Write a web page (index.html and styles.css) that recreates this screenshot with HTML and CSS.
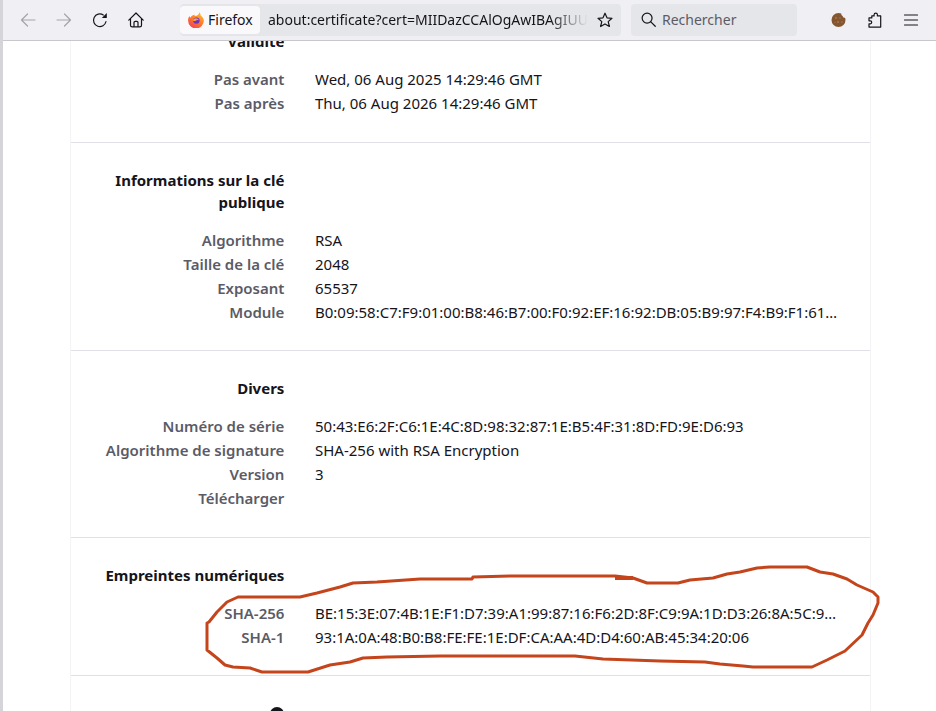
FILE: index.html
```html
<!DOCTYPE html>
<html lang="fr">
<head>
<meta charset="utf-8">
<title>Certificat</title>
<link rel="stylesheet" href="styles.css">
</head>
<body>
<div class="window">
  <header class="toolbar">
    <button class="tool tool-off" aria-label="Retour"><svg viewBox="0 0 16 16"><path d="M15 8H1.500M7.500 2 1.500 8l6 6"/></svg></button>
    <button class="tool tool-off" aria-label="Avancer"><svg viewBox="0 0 16 16"><path d="M1 8h13.500M8.500 2l6 6-6 6"/></svg></button>
    <button class="tool" aria-label="Actualiser"><svg viewBox="0 0 16 16"><path d="M14 9.500A6.300 6.300 0 1 1 11.300 3"/><path class="fill" d="M14.800 1v5H9.800z"/></svg></button>
    <button class="tool" aria-label="Accueil"><svg viewBox="0 0 16 16"><path d="M.8 8.200 8 1l7.200 7.200M2.500 6.800v6.400c0 1 .7 1.700 1.700 1.700h7.600c1 0 1.700-.7 1.700-1.700V6.800M6 14.800V10.500c0-.7.500-1.200 1.200-1.200h1.600c.7 0 1.200.5 1.200 1.200v4.300"/></svg></button>
    <div class="urlbar">
      <div class="chip">
        <svg class="fx" viewBox="0 0 16 16">
          <defs>
            <linearGradient id="fxg" x1="0.8" y1="0" x2="0.2" y2="1"><stop offset="0" stop-color="#ffc32b"/><stop offset=".5" stop-color="#ff7a2a"/><stop offset="1" stop-color="#f23c5e"/></linearGradient>
          </defs>
          <path fill="url(#fxg)" d="M11.200 0c1 1.200 1.500 2.300 1.500 3.400 1.200.9 3.100 2.500 3.200 5A7.900 7.900 0 0 1 .1 8.700C0 7 .5 5.200 1.500 4c.2.8.5 1.200 1 1.700C3.200 4 4.800 3 6.800 2.700c-.3.500-.3 1 0 1.300C9.200 3.800 11.300 2.300 11.200 0z"/>
          <circle cx="8.400" cy="8.600" r="3.200" fill="#7335b8"/>
          <path fill="#ffa02e" d="M5 8.400c1 .8 2.100.6 3.100 0 .9-.6 1.900-.6 2.700-.2-.5-1.200-1.600-1.900-2.800-1.900-1.500 0-2.800.9-3 2.100z"/>
        </svg>
        <span>Firefox</span>
      </div>
      <span class="url">about:certificate?cert=MIIDazCCAlOgAwIBAgIUU</span>
      <svg class="star" viewBox="0 0 16 16"><path d="M8 1.200 10 5.800l5 .5-3.800 3.300 1.200 4.900L8 11.900l-4.400 2.600 1.200-4.900L1 6.300l5-.5z"/></svg>
    </div>
    <div class="search">
      <svg viewBox="0 0 16 16"><circle cx="6.500" cy="6.500" r="5.300"/><path d="m10.500 10.500 4.700 4.700"/></svg>
      <span>Rechercher</span>
    </div>
    <div class="tools-right">
      <button class="tool" aria-label="Cookie"><svg class="cookie" viewBox="0 0 16 16"><path d="M7.500 1c1 0 1.900.2 2.800.6-.2 1.200.3 2.200 1.400 2.400 0 1.100.9 1.900 2.300 1.800.3.700.5 1.400.5 2.200a7 7 0 1 1-7-7z"/><circle class="crumb" cx="5" cy="6" r=".9"/><circle class="crumb" cx="9" cy="6" r=".8"/><circle class="crumb" cx="7" cy="10" r="1"/><circle class="crumb" cx="11" cy="10" r=".8"/><circle class="crumb" cx="4" cy="10.500" r=".6"/></svg></button>
      <button class="tool" aria-label="Extensions"><svg viewBox="0 0 16 16"><path d="M5.300 3.500h2.300V2.300c0-2 3.300-2 3.300 0v1.200h3.300v11.200H2.500v-3.300h1.300c1.900 0 1.900-3 0-3H2.500V5.500h2.800z" transform="translate(-.5 .4)"/></svg></button>
      <button class="tool" aria-label="Menu"><svg viewBox="0 0 16 16"><path d="M1.500 3h13M1.500 8h13M1.500 13h13"/></svg></button>
    </div>
  </header>

  <main class="viewport">
    <article class="card">
      <section class="section section-first">
        <h2 class="heading">Validité</h2>
        <div class="row"><span class="label">Pas avant</span><span class="value">Wed, 06 Aug 2025 14:29:46 GMT</span></div>
        <div class="row"><span class="label">Pas après</span><span class="value">Thu, 06 Aug 2026 14:29:46 GMT</span></div>
      </section>
      <section class="section">
        <h2 class="heading">Informations sur la clé publique</h2>
        <div class="row"><span class="label">Algorithme</span><span class="value">RSA</span></div>
        <div class="row"><span class="label">Taille de la clé</span><span class="value">2048</span></div>
        <div class="row"><span class="label">Exposant</span><span class="value">65537</span></div>
        <div class="row"><span class="label">Module</span><span class="value">B0:09:58:C7:F9:01:00:B8:46:B7:00:F0:92:EF:16:92:DB:05:B9:97:F4:B9:F1:61…</span></div>
      </section>
      <section class="section">
        <h2 class="heading">Divers</h2>
        <div class="row"><span class="label">Numéro de série</span><span class="value">50:43:E6:2F:C6:1E:4C:8D:98:32:87:1E:B5:4F:31:8D:FD:9E:D6:93</span></div>
        <div class="row"><span class="label">Algorithme de signature</span><span class="value">SHA-256 with RSA Encryption</span></div>
        <div class="row"><span class="label">Version</span><span class="value">3</span></div>
        <div class="row row-tall"><span class="label">Télécharger</span><span class="value"></span></div>
      </section>
      <section class="section">
        <h2 class="heading">Empreintes numériques</h2>
        <div class="row"><span class="label">SHA-256</span><span class="value">BE:15:3E:07:4B:1E:F1:D7:39:A1:99:87:16:F6:2D:8F:C9:9A:1D:D3:26:8A:5C:9…</span></div>
        <div class="row"><span class="label">SHA-1</span><span class="value">93:1A:0A:48:B0:B8:FE:FE:1E:DF:CA:AA:4D:D4:60:AB:45:34:20:06</span></div>
      </section>
      <section class="section section-last">
        <div class="dot-col"><span class="dot"></span></div>
      </section>
    </article>
    <svg class="scribble" viewBox="0 0 936 711" aria-hidden="true">
      <path d="M207 623 209 622 217 612 227 602 238 597H300L317 593 340 587 353 583 377 582 420 579H472L473 577 510 576H615L633 578 647 583H678L690 580 713 578 727 574 740 572 757 568 770 567H807L820 572 833 574 847 579 857 585 873 592 878 597V603L873 615 868 623 862 635 845 651 827 660 812 667H753L743 666 720 664 705 662 660 661 603 659 575 656H440L387 657 363 658 350 662 330 665 308 672H262L250 668 233 667 225 665 217 658 207 650z"/>
      <rect x="615" y="576" width="18" height="4"/>
    </svg>
  </main>
</div>
</body>
</html>
```

FILE: styles.css
```css
* { box-sizing: border-box; }

html, body {
  margin: 0;
  height: 100%;
  overflow: hidden;
  background: #fff;
}

body {
  font-family: "Noto Sans", sans-serif;
  color: #15141a;
}

.window {
  height: 711px;
  display: flex;
  flex-direction: column;
  border-left: 3px solid #a9a9b0;
  border-image: linear-gradient(to right, #d4d4d9 33%, #8f8f97 33%, #8f8f97 66%, #c4c4ca 66%) 1;
  position: relative;
}

/* Toolbar */
.toolbar {
  flex: 0 0 41px;
  display: flex;
  align-items: center;
  padding: 0 7px 1px 7px;
  background: #f0f0f4;
  border-bottom: 1px solid #c8c8cc;
}

.tool {
  width: 36px;
  height: 32px;
  padding: 0;
  border: 0;
  background: none;
  display: flex;
  align-items: center;
  justify-content: center;
}

.tool svg {
  width: 16px;
  height: 16px;
  fill: none;
  stroke: #15141a;
  stroke-width: 1.2;
  stroke-linejoin: round;
  stroke-linecap: round;
}

.tool svg .fill {
  fill: #15141a;
  stroke: none;
}

.tool-off svg { stroke: #a3a3a9; }

.urlbar {
  margin-left: 26px;
  width: 441px;
  height: 32px;
  display: flex;
  align-items: center;
  background: #e5e6e9;
  border-radius: 4px;
  overflow: hidden;
  font-size: 14px;
  position: relative;
}

.chip {
  flex: 0 0 80px;
  height: 28px;
  display: flex;
  align-items: center;
  gap: 4px;
  padding-left: 8px;
  background: #f9f9fb;
  border-radius: 4px;
}

.fx {
  width: 16px;
  height: 16px;
}

.url {
  margin-left: 8px;
  width: 320px;
  white-space: nowrap;
  overflow: hidden;
  -webkit-mask-image: linear-gradient(to right, #000 88%, transparent 100%);
  mask-image: linear-gradient(to right, #000 88%, transparent 100%);
}

.star {
  width: 16px;
  height: 16px;
  margin-left: 9px;
  fill: none;
  stroke: #15141a;
  stroke-width: 1.2;
  stroke-linejoin: round;
}

.search {
  margin-left: 10px;
  width: 166px;
  height: 32px;
  display: flex;
  align-items: center;
  gap: 6px;
  padding-left: 10px;
  background: #e5e6e9;
  border-radius: 4px;
  font-size: 14px;
  color: #5b5b66;
}

.search svg {
  width: 15px;
  height: 15px;
  fill: none;
  stroke: #15141a;
  stroke-width: 1.3;
  stroke-linecap: round;
}

.tools-right {
  margin-left: auto;
  display: flex;
}

.tool svg.cookie {
  stroke: none;
  fill: #85552f;
}

.tool svg.cookie .crumb { fill: #a67a52; }

/* Page */
.viewport {
  flex: 1;
  min-height: 0;
  overflow: hidden;
  padding-left: 67px;
}

.card {
  width: 801px;
  margin-top: -37px;
  border-left: 1px solid #f4f4f6;
  border-right: 1px solid #f4f4f6;
}

.section {
  padding: 26px 0 26px;
  border-bottom: 1px solid #e0e0e6;
  font-size: 15px;
}

.section-first { padding-bottom: 27px; }

.heading {
  width: 213.4px;
  margin: 0 0 15px;
  padding-left: 15px;
  font-size: 15px;
  line-height: 22px;
  font-weight: 700;
  text-align: right;
}

.row {
  display: flex;
  gap: 30.6px;
  height: 24px;
  line-height: 24px;
}

.row-tall { height: 25px; }

.label {
  flex: 0 0 213.4px;
  font-weight: 600;
  text-align: right;
  color: #5b5b66;
  white-space: nowrap;
}

.value {
  white-space: nowrap;
}

.section-last {
  border-bottom: 0;
  padding-top: 31px;
}

.dot-col {
  width: 213px;
  display: flex;
  justify-content: flex-end;
}

.dot {
  width: 14px;
  height: 14px;
  border-radius: 50%;
  background: #15141a;
}

/* Hand-drawn annotation over the page */
.scribble {
  position: absolute;
  left: 0;
  top: 0;
  width: 936px;
  height: 711px;
  margin-left: -3px;
  pointer-events: none;
}

.scribble path {
  fill: none;
  stroke: #c4451b;
  stroke-width: 3;
  stroke-linejoin: round;
}

.scribble rect { fill: #c4451b; }
```
